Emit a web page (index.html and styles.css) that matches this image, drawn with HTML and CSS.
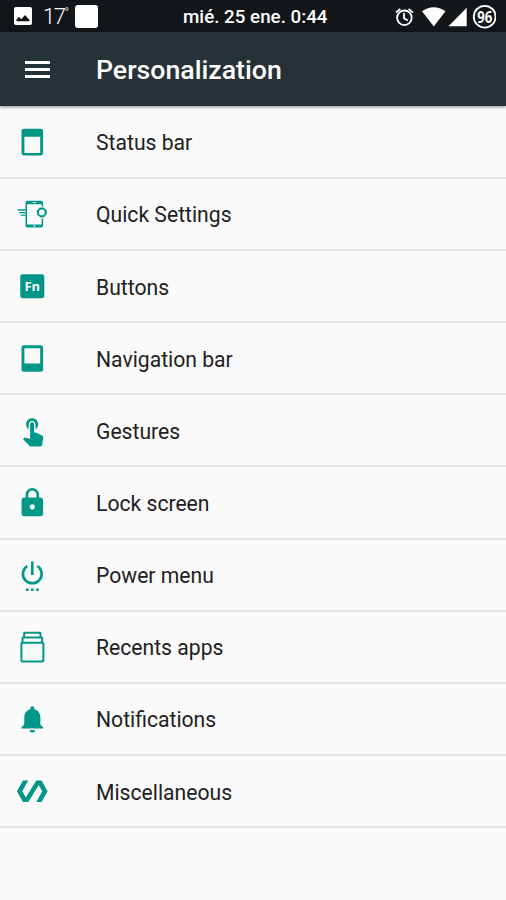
FILE: index.html
```html
<!DOCTYPE html>
<html lang="en">
<head>
<meta charset="utf-8">
<title>Personalization</title>
<link rel="stylesheet" href="styles.css">
</head>
<body>
<div class="status">
  <div class="status-left">
    <svg class="picture" width="18" height="18" viewBox="0 0 18 18"><rect width="18" height="18" rx="2" fill="#fff"/><path d="M2.5 14.3v-1.8l2.5-2.7 2.2 2.4 3.8-4.2 4.3 4.8v1.5z" fill="#121619"/></svg>
    <span class="temp">17<span class="degree">°</span></span>
    <span class="tile"></span>
  </div>
  <span class="clock">mié. 25 ene. 0:44</span>
  <svg class="status-right" width="106" height="32" viewBox="390 0 106 32">
    <g fill="none" stroke="#fff" stroke-width="1.8"><circle cx="404.4" cy="16.8" r="7.3"/><path d="M404 12v5.2l3.8 2.4M396 11.5l4.2-3.6M412.8 11.5l-4.2-3.6"/></g>
    <path d="M422 10.2Q433.8 2.2 445.5 10.2L433.8 25.5zM448.5 25.2L466.7 6.7v18.5z" fill="#fff"/>
    <circle cx="484.7" cy="15.7" r="10.9" fill="none" stroke="#fff" stroke-width="1.8"/>
    <text class="battery" x="484.7" y="21.5" text-anchor="middle" textLength="15" lengthAdjust="spacingAndGlyphs">96</text>
  </svg>
</div>
<header class="toolbar">
  <span class="menu"><i></i><i></i><i></i></span>
  <h1>Personalization</h1>
</header>
<ul class="list">
  <li><svg viewBox="14 0 36 72"><path fill-rule="evenodd" d="M23.8 21.8h17a2.3 2.3 0 0 1 2.3 2.3v22a2.3 2.3 0 0 1-2.3 2.3h-17a2.3 2.3 0 0 1-2.3-2.3v-22a2.3 2.3 0 0 1 2.3-2.3zM24.4 29.8v16.2h15.8V29.8z"/></svg>Status bar</li>
  <li><svg viewBox="14 0 36 72"><path fill-rule="evenodd" d="M27.3 21.7h14a1.8 1.8 0 0 1 1.8 1.8v23.3a1.8 1.8 0 0 1-1.8 1.8h-14a1.8 1.8 0 0 1-1.8-1.8V23.5a1.8 1.8 0 0 1 1.8-1.8zM27 25.2v20.3h14.6v-20.3z"/><circle class="cutout" cx="41.8" cy="33.4" r="6"/><circle class="line gear" cx="41.8" cy="33.4" r="3.8"/><circle class="line teeth" cx="41.8" cy="33.4" r="4.8"/><path class="line thin" d="M17.7 31h7.8M19.2 33.6h6.3M20.7 36.2h4.8"/><path class="pale" d="M32.5 23h3.8v.8h-3.8zM33.6 46.3h1.5v1.4h-1.5z"/></svg>Quick Settings</li>
  <li><svg viewBox="14 0 36 72"><rect x="20.3" y="23.3" width="24" height="24" rx="2.4"/><text class="fn" x="32.3" y="40" text-anchor="middle">Fn</text></svg>Buttons</li>
  <li><svg viewBox="14 0 36 72"><path fill-rule="evenodd" d="M23.8 22.2h17a2.3 2.3 0 0 1 2.3 2.3v22a2.3 2.3 0 0 1-2.3 2.3h-17a2.3 2.3 0 0 1-2.3-2.3v-22a2.3 2.3 0 0 1 2.3-2.3zM24.4 25.2v15.4h15.8V25.2z"/></svg>Navigation bar</li>
  <li><svg viewBox="14 0 36 72"><path transform="translate(16.6 19.15) scale(1.35)" d="M9 11.24V7.5C9 6.12 10.12 5 11.5 5S14 6.12 14 7.5v3.74c1.21-.81 2-2.18 2-3.74C16 5.01 13.99 3 11.5 3S7 5.01 7 7.5c0 1.56.79 2.93 2 3.74zm9.84 4.63l-4.54-2.26c-.17-.07-.35-.11-.54-.11H13v-6c0-.83-.67-1.5-1.5-1.5S10 6.67 10 7.5v10.74l-3.43-.72c-.08-.01-.15-.03-.24-.03-.31 0-.59.13-.79.33l-.79.8 4.94 4.94c.27.27.65.44 1.06.44h6.79c.75 0 1.33-.55 1.44-1.28l.75-5.27c.01-.07.02-.14.02-.2 0-.62-.38-1.16-.91-1.38z"/></svg>Gestures</li>
  <li><svg viewBox="14 0 36 72"><path transform="translate(16.2 19.65) scale(1.345)" d="M18 8h-1V6c0-2.76-2.24-5-5-5S7 3.24 7 6v2H6c-1.1 0-2 .9-2 2v10c0 1.1.9 2 2 2h12c1.1 0 2-.9 2-2V10c0-1.1-.9-2-2-2zm-6 9c-1.1 0-2-.9-2-2s.9-2 2-2 2 .9 2 2-.9 2-2 2zm3.1-9H8.9V6c0-1.71 1.39-3.1 3.1-3.1s3.1 1.39 3.1 3.1v2z"/></svg>Lock screen</li>
  <li><svg viewBox="14 0 36 72"><path class="line power" d="M32.3 21.4v13.6M27.2 26A9.4 9.4 0 1 0 37.4 26"/><path d="M25.9 48.4h2.6v2.6h-2.6zM31 48.4h2.6v2.6H31zM36.2 48.4h2.6v2.6h-2.6z"/></svg>Power menu</li>
  <li><svg viewBox="14 0 36 72"><rect class="line stack" x="21.4" y="30.7" width="22" height="18.7" rx="1"/><path class="line stack" d="M22.5 30.5V26.200q0-.8.8-.8h18q.8 0 .8.800v4.300M24.100 25v-3.600q0-.6.6-.6h15.200q.6 0 .6.600V25"/></svg>Recents apps</li>
  <li><svg viewBox="14 0 36 72"><path transform="translate(16.2 19) scale(1.345)" d="M12 22c1.1 0 2-.9 2-2h-4c0 1.1.89 2 2 2zm6-6v-5c0-3.07-1.64-5.64-4.5-6.32V4c0-.83-.67-1.5-1.5-1.5s-1.5.67-1.5 1.5v.68C7.63 5.36 6 7.92 6 11v5l-2 2v1h16v-1l-2-2z"/></svg>Notifications</li>
  <li><svg viewBox="14 0 36 72"><path transform="translate(16.3 19) scale(1.33 1.35)" d="M19 4h-4L7.11 16.63 4.5 12 9 4H5L.5 12 5 20h4l7.89-12.63L19.5 12 15 20h4l4.5-8z"/></svg>Miscellaneous</li>
</ul>
</body>
</html>
```

FILE: styles.css
```css
* { box-sizing: border-box; }
body {
  margin: 0;
  min-height: 900px;
  background: #fafafa;
  color: #212121;
  font-family: Roboto, sans-serif;
}
.status {
  display: grid;
  grid-template-columns: 182px 1fr 106px;
  align-items: center;
  height: 32px;
  padding-right: 10px;
  background: #121619;
  color: #fff;
}
.status-left { display: flex; align-items: center; height: 32px; padding-left: 14px; }
.picture { margin-top: -1px; }
.temp {
  display: flex;
  width: 23px;
  margin-left: 11px;
  font-size: 22px;
  font-weight: 300;
  line-height: 32px;
  letter-spacing: -1.5px;
}
.degree { font-size: 12px; line-height: 25px; }
.tile { width: 23px; height: 23px; margin: -1px 0 0 9px; border-radius: 3px; background: #fff; }
.clock { font-size: 18.8px; font-weight: 500; line-height: 32px; white-space: nowrap; padding-left: 1px; padding-top: 1px; }
.battery { fill: #fff; font: 700 16px "Open Sans", sans-serif; }
.toolbar {
  display: flex;
  align-items: center;
  position: relative;
  height: 74px;
  padding-left: 25px;
  background: #263138;
  color: #fff;
  box-shadow: 0 1px 3px rgba(0, 0, 0, .45);
}
.menu { display: flex; flex-direction: column; gap: 4px; width: 71px; padding-top: 1px; }
.menu i { width: 25px; height: 3px; background: #fff; }
h1 { margin: 0; padding-top: 2px; font-size: 26.7px; font-weight: 500; }
.list { margin: 0; padding: .7px 0 0; list-style: none; }
.list li {
  display: flex;
  align-items: center;
  height: 72.15px;
  padding: 3px 0 0 14px;
  border-bottom: 2px solid #e2e2e2;
  font-size: 21.15px;
  line-height: 28px;
}
.list svg { width: 36px; height: 72px; flex: none; margin: -1px 46px 0 0; fill: #009688; }
.list .line { fill: none; stroke: #009688; }
.thin { stroke-width: 1.3; }
.gear { stroke-width: 1.9; }
.teeth { stroke-width: 1; stroke-dasharray: 2 1.77; }
.power { stroke-width: 2.6; }
.stack { stroke-width: 2; stroke-linejoin: round; }
.list .cutout, .list .pale { fill: #fafafa; }
.fn { fill: #fafafa; font: 700 13px "Open Sans", sans-serif; }
```
